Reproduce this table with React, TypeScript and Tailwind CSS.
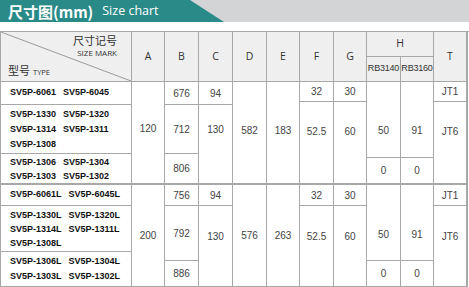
import React from "react";

const line = "border-[#a8a8a8]";
const cellHead = `flex items-center justify-center border-r border-b ${line} bg-[#efefef] text-[#333]`;
const head = `${cellHead} text-[10.5px] font-[family-name:'Open_Sans',sans-serif]`;
const rb = `${cellHead} text-[9px] tracking-[-0.2px] font-[family-name:'Liberation_Sans',Arial,sans-serif]`;
const num = `flex items-center justify-center border-r border-b ${line} bg-white text-[10px] text-[#444] font-[family-name:'Liberation_Sans',Arial,sans-serif]`;
const model = `flex flex-col justify-center border-r border-b ${line} bg-white pl-[9px] text-[9px] font-bold text-[#111] font-[family-name:'Liberation_Sans',Arial,sans-serif]`;

function Pair({ a, b }: { a: string; b?: string }) {
  return (
    <div className="flex gap-[7px]">
      <span>{a}</span>
      {b && <span>{b}</span>}
    </div>
  );
}

export default function App() {
  return (
    <div className="w-[469px] h-[287px] overflow-hidden bg-white">
      <div className="relative h-[22px] bg-[#d3d4d6]">
        <div className="absolute inset-y-0 left-0 w-[224px] bg-[#2a8a87] [clip-path:polygon(0_0,190px_0,224px_100%,0_100%)]" />
        <div className="relative flex h-full items-center pl-[8px] text-white">
          <span className="text-[15px] font-bold leading-none font-[family-name:'Noto_Sans_CJK_SC',sans-serif]">尺寸图(mm)</span>
          <span className="ml-[9px] text-[12.5px] leading-none font-[family-name:'Open_Sans',sans-serif]">Size chart</span>
        </div>
      </div>

      <div
        className={`mt-[9px] grid border-l border-t ${line} grid-cols-[131px_33px_34px_34px_34px_33px_34px_33px_34px_33px_34px] grid-rows-[25px_25px_20px_3px_49px_4px_27px_21px_46px_9px_27px]`}
      >
        {/* header */}
        <div className={`relative col-start-1 row-start-1 row-span-2 border-r border-b ${line} bg-[#efefef] text-[#333]`}>
          <svg className="absolute inset-0 h-full w-full" preserveAspectRatio="none" viewBox="0 0 100 100">
            <line x1="0" y1="0" x2="100" y2="100" stroke="#9a9a9a" strokeWidth="1" vectorEffect="non-scaling-stroke" />
          </svg>
          <span className="absolute right-[14px] top-[3px] text-[11px] leading-[11px] font-[family-name:'Noto_Sans_CJK_SC',sans-serif]">
            尺寸记号
          </span>
          <span className="absolute right-[14px] top-[17px] text-[8px] leading-[8px] font-[family-name:'Open_Sans',sans-serif]">
            SIZE MARK
          </span>
          <div className="absolute left-[7px] top-[33px] flex items-baseline leading-none">
            <span className="text-[11px] font-[family-name:'Noto_Sans_CJK_SC',sans-serif]">型号</span>
            <span className="ml-[3px] text-[7.5px] font-[family-name:'Open_Sans',sans-serif]">TYPE</span>
          </div>
        </div>
        <div className={`${head} col-start-2 row-start-1 row-span-2`}>A</div>
        <div className={`${head} col-start-3 row-start-1 row-span-2`}>B</div>
        <div className={`${head} col-start-4 row-start-1 row-span-2`}>C</div>
        <div className={`${head} col-start-5 row-start-1 row-span-2`}>D</div>
        <div className={`${head} col-start-6 row-start-1 row-span-2`}>E</div>
        <div className={`${head} col-start-7 row-start-1 row-span-2`}>F</div>
        <div className={`${head} col-start-8 row-start-1 row-span-2`}>G</div>
        <div className={`${head} col-start-9 col-span-2 row-start-1`}>H</div>
        <div className={`${rb} col-start-9 row-start-2`}>RB3140</div>
        <div className={`${rb} col-start-10 row-start-2`}>RB3160</div>
        <div className={`${head} col-start-11 row-start-1 row-span-2 border-r-2`}>T</div>

        {/* group 1 */}
        <div className={`${model} col-start-1 row-start-3 row-span-2`}>
          <Pair a="SV5P-6061" b="SV5P-6045" />
        </div>
        <div className={`${model} col-start-1 row-start-5 leading-[15px]`}>
          <Pair a="SV5P-1330" b="SV5P-1320" />
          <Pair a="SV5P-1314" b="SV5P-1311" />
          <Pair a="SV5P-1308" />
        </div>
        <div className={`${model} col-start-1 row-start-6 row-span-2 border-b-2 leading-[14px]`}>
          <Pair a="SV5P-1306" b="SV5P-1304" />
          <Pair a="SV5P-1303" b="SV5P-1302" />
        </div>
        <div className={`${num} col-start-2 row-start-3 row-span-5 border-b-2 pb-[8px]`}>120</div>
        <div className={`${num} col-start-3 row-start-3 row-span-2`}>676</div>
        <div className={`${num} col-start-3 row-start-5`}>712</div>
        <div className={`${num} col-start-3 row-start-6 row-span-2 border-b-2`}>806</div>
        <div className={`${num} col-start-4 row-start-3 row-span-2`}>94</div>
        <div className={`${num} col-start-4 row-start-5 row-span-3 border-b-2 pb-[30px]`}>130</div>
        <div className={`${num} col-start-5 row-start-3 row-span-5 border-b-2 pb-[4px]`}>582</div>
        <div className={`${num} col-start-6 row-start-3 row-span-5 border-b-2 pb-[4px]`}>183</div>
        <div className={`${num} col-start-7 row-start-3`}>32</div>
        <div className={`${num} col-start-7 row-start-4 row-span-4 border-b-2 pb-[22px]`}>52.5</div>
        <div className={`${num} col-start-8 row-start-3`}>30</div>
        <div className={`${num} col-start-8 row-start-4 row-span-4 border-b-2 pb-[22px]`}>60</div>
        <div className={`${num} col-start-9 row-start-3 row-span-4 pt-[22px]`}>50</div>
        <div className={`${num} col-start-9 row-start-7 border-b-2`}>0</div>
        <div className={`${num} col-start-10 row-start-3 row-span-4 pt-[22px]`}>91</div>
        <div className={`${num} col-start-10 row-start-7 border-b-2`}>0</div>
        <div className={`${num} col-start-11 row-start-3 border-r-2`}>JT1</div>
        <div className={`${num} col-start-11 row-start-4 row-span-4 border-r-2 border-b-2 pb-[22px]`}>JT6</div>

        {/* group 2 */}
        <div className={`${model} col-start-1 row-start-8`}>
          <Pair a="SV5P-6061L" b="SV5P-6045L" />
        </div>
        <div className={`${model} col-start-1 row-start-9 leading-[14px]`}>
          <Pair a="SV5P-1330L" b="SV5P-1320L" />
          <Pair a="SV5P-1314L" b="SV5P-1311L" />
          <Pair a="SV5P-1308L" />
        </div>
        <div className={`${model} col-start-1 row-start-10 row-span-2 border-b-2 leading-[15px]`}>
          <Pair a="SV5P-1306L" b="SV5P-1304L" />
          <Pair a="SV5P-1303L" b="SV5P-1302L" />
        </div>
        <div className={`${num} col-start-2 row-start-8 row-span-4 border-b-2`}>200</div>
        <div className={`${num} col-start-3 row-start-8`}>756</div>
        <div className={`${num} col-start-3 row-start-9 row-span-2`}>792</div>
        <div className={`${num} col-start-3 row-start-11 border-b-2`}>886</div>
        <div className={`${num} col-start-4 row-start-8`}>94</div>
        <div className={`${num} col-start-4 row-start-9 row-span-3 border-b-2 pb-[20px]`}>130</div>
        <div className={`${num} col-start-5 row-start-8 row-span-4 border-b-2`}>576</div>
        <div className={`${num} col-start-6 row-start-8 row-span-4 border-b-2`}>263</div>
        <div className={`${num} col-start-7 row-start-8`}>32</div>
        <div className={`${num} col-start-7 row-start-9 row-span-3 border-b-2 pb-[20px]`}>52.5</div>
        <div className={`${num} col-start-8 row-start-8`}>30</div>
        <div className={`${num} col-start-8 row-start-9 row-span-3 border-b-2 pb-[20px]`}>60</div>
        <div className={`${num} col-start-9 row-start-8 row-span-3 pt-[24px]`}>50</div>
        <div className={`${num} col-start-9 row-start-11 border-b-2`}>0</div>
        <div className={`${num} col-start-10 row-start-8 row-span-3 pt-[24px]`}>91</div>
        <div className={`${num} col-start-10 row-start-11 border-b-2`}>0</div>
        <div className={`${num} col-start-11 row-start-8 border-r-2`}>JT1</div>
        <div className={`${num} col-start-11 row-start-9 row-span-3 border-r-2 border-b-2 pb-[20px]`}>JT6</div>
      </div>
    </div>
  );
}
